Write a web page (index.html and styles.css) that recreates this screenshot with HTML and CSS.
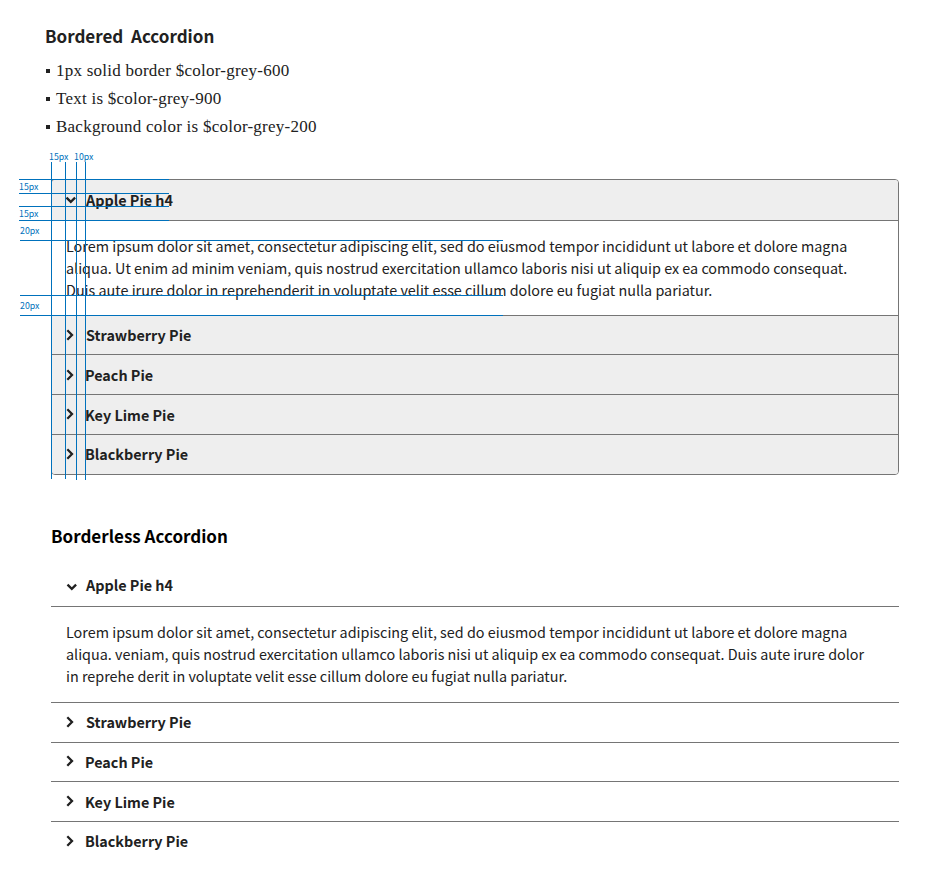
FILE: index.html
```
<!DOCTYPE html>
<html lang="en">
<head>
<meta charset="utf-8">
<title>Accordion</title>
<link rel="stylesheet" href="styles.css">
</head>
<body>
<svg class="defs" width="0" height="0">
  <symbol id="down" viewBox="0 0 12 8"><path d="M1.5 1.6L5.8 5.8L10.1 1.6"/></symbol>
  <symbol id="right" viewBox="0 0 8 12"><path d="M1.3 1.3L6 6L1.3 10.7"/></symbol>
</svg>
<main>
  <h2 class="title">Bordered&nbsp; Accordion</h2>
  <ul class="rules">
    <li>1px solid border $color-grey-600</li>
    <li>Text is $color-grey-900</li>
    <li>Background color is $color-grey-200</li>
  </ul>

  <section class="accordion bordered">
    <h4 class="head open"><svg class="down"><use href="#down"/></svg>Apple Pie h4</h4>
    <p class="panel">Lorem ipsum dolor sit amet, consectetur adipiscing elit, sed do eiusmod tempor incididunt ut labore et dolore magna<br>aliqua. Ut enim ad minim veniam, quis nostrud exercitation ullamco laboris nisi ut aliquip ex ea commodo consequat.<br>Duis aute irure dolor in reprehenderit in voluptate velit esse cillum dolore eu fugiat nulla pariatur.</p>
    <h4 class="head short"><svg class="right wide"><use href="#right"/></svg>Strawberry Pie</h4>
    <h4 class="head low"><svg class="right"><use href="#right"/></svg>Peach Pie</h4>
    <h4 class="head low"><svg class="right raised"><use href="#right"/></svg>Key Lime Pie</h4>
    <h4 class="head"><svg class="right"><use href="#right"/></svg>Blackberry Pie</h4>
  </section>

  <h2 class="title second">Borderless Accordion</h2>
  <section class="accordion plain">
    <h4 class="head open"><svg class="down"><use href="#down"/></svg>Apple Pie h4</h4>
    <p class="panel">Lorem ipsum dolor sit amet, consectetur adipiscing elit, sed do eiusmod tempor incididunt ut labore et dolore magna<br>aliqua. veniam, quis nostrud exercitation ullamco laboris nisi ut aliquip ex ea commodo consequat. Duis aute irure dolor<br>in reprehe derit in voluptate velit esse cillum dolore eu fugiat nulla pariatur.</p>
    <h4 class="head"><svg class="right wide"><use href="#right"/></svg>Strawberry Pie</h4>
    <h4 class="head short"><svg class="right"><use href="#right"/></svg>Peach Pie</h4>
    <h4 class="head low"><svg class="right raised"><use href="#right"/></svg>Key Lime Pie</h4>
    <h4 class="head last"><svg class="right"><use href="#right"/></svg>Blackberry Pie</h4>
  </section>
</main>

<svg class="guides" width="520" height="490" viewBox="0 0 520 490">
  <path d="M51.5 162V479M65.5 162V479M76.5 162V480M85.5 162V480M19 179.5H169M19 193.5H169M19 206.5H169M19 220.5H169M20 240.5H503M20 295.5H503M20 315.5H503"/>
  <text x="49" y="160">15px</text>
  <text x="74" y="160">10px</text>
  <text x="19" y="190">15px</text>
  <text x="19" y="217">15px</text>
  <text x="20" y="234">20px</text>
  <text x="20" y="309">20px</text>
</svg>
</body>
</html>
```
FILE: styles.css
```
* { box-sizing: border-box; }
body {
  margin: 0;
  width: 950px;
  height: 892px;
  background: #fff;
  color: #212121;
  font-family: "Noto Sans CJK SC", "Open Sans", sans-serif;
}
.defs { position: absolute; }
main { padding: 22px 51px 0; }
.title {
  margin: 0 0 0 -6px;
  font-size: 17px;
  line-height: 27px;
  font-weight: 700;
  white-space: nowrap;
}
.rules {
  list-style: none;
  margin: 8px 0 38px -6px;
  padding: 0;
  font-family: Georgia, "Liberation Serif", serif;
  font-size: 17px;
  letter-spacing: 0.24px;
  line-height: 28px;
  white-space: nowrap;
}
.rules li { display: flex; align-items: center; }
.rules li::before {
  content: "";
  width: 4px;
  height: 4px;
  margin: 0 6px 0 1px;
  background: #212121;
}
.accordion { width: 848px; }
.bordered {
  border: 1px solid #757575;
  border-radius: 4px;
  overflow: hidden;
}
.head {
  display: flex;
  align-items: center;
  height: 40px;
  margin: 0;
  padding: 0 0 1px 14px;
  border-bottom: 1px solid #757575;
  font-size: 14.37px;
  line-height: 22px;
  font-weight: 700;
  white-space: nowrap;
}
.head svg {
  flex: none;
  margin-right: 8px;
  fill: none;
  stroke: #212121;
  stroke-width: 2.3;
}
.head .down { width: 12px; height: 8px; }
.bordered .down { margin: 1px 9px 0 -1px; }
.plain .down { margin-top: 3px; }
.head .right { width: 8px; height: 12px; margin-right: 11px; }
.head .wide { margin-right: 12px; }
.plain .right { margin-bottom: 1px; }
.head .raised { margin-bottom: 2px; }
.bordered .head { background: #eee; }
.bordered .open { height: 41px; }
.head.short { height: 39px; }
.bordered .head.low, .plain .head.low { padding-bottom: 0; }
.bordered .head:last-child { height: 39px; border: 0; }
.panel {
  margin: 0;
  padding: 14px 0 0 14px;
  height: 95px;
  border-bottom: 1px solid #757575;
  font-size: 14.37px;
  line-height: 22px;
  white-space: nowrap;
}
.title.second { margin: 47px 0 17px; color: #000; }
.plain .head, .plain .panel { padding-left: 15px; }
.plain .open { height: 41px; padding-bottom: 2px; }
.plain .panel { height: 96px; }
.plain .last { border: 0; padding-bottom: 2px; }
.guides { position: absolute; left: 0; top: 0; }
.guides path { stroke: #0071bc; stroke-width: 1; fill: none; }
.guides text { fill: #0071bc; font-size: 8.8px; }
```
